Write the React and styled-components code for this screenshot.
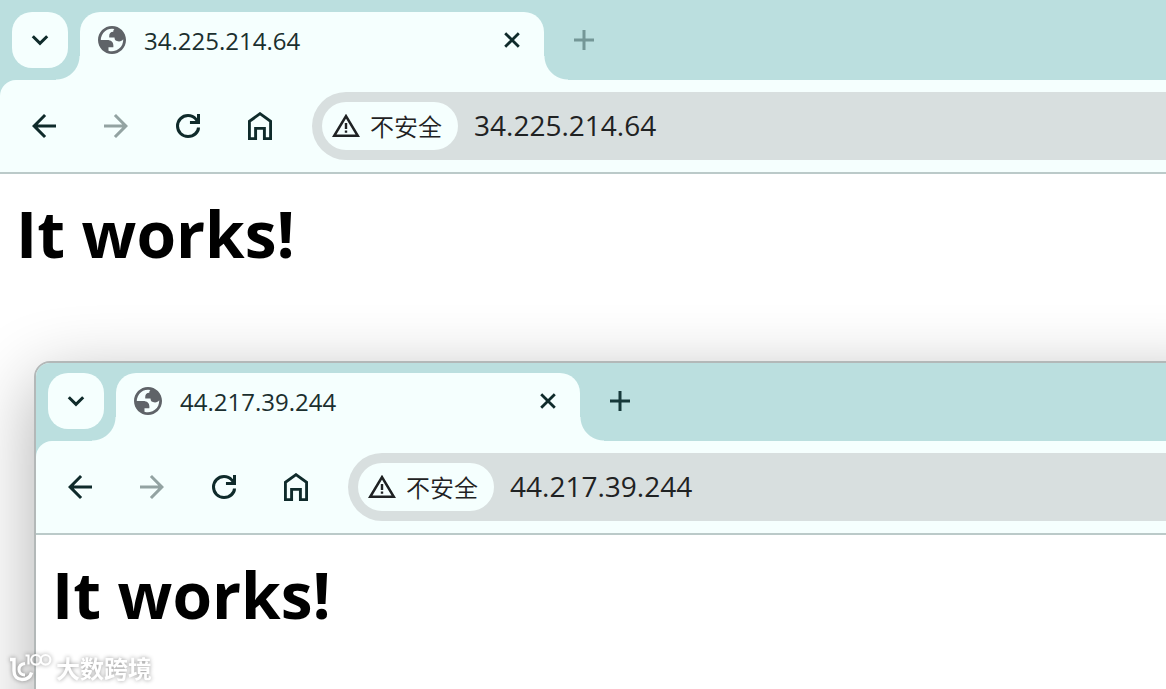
import React from "react";
import styled, { createGlobalStyle } from "styled-components";

const BackIcon = () => (
  <svg width="36" height="36" viewBox="0 0 24 24" aria-hidden="true">
    <path
      fill="currentColor"
      d="m7.825 13 5.6 5.6L12 20l-8-8 8-8 1.425 1.4-5.6 5.6H20v2Z"
    />
  </svg>
);

const ForwardIcon = () => (
  <svg width="36" height="36" viewBox="0 0 24 24" aria-hidden="true">
    <path
      fill="currentColor"
      d="m16.175 13-5.6 5.6L12 20l8-8-8-8-1.425 1.4 5.6 5.6H4v2Z"
    />
  </svg>
);

const ReloadIcon = () => (
  <svg width="36" height="36" viewBox="0 0 24 24" aria-hidden="true">
    <path
      fill="currentColor"
      d="M12 20q-3.35 0-5.675-2.325Q4 15.35 4 12t2.325-5.675Q8.65 4 12 4q1.725 0 3.3.713 1.575.712 2.7 2.037V4h2v6.7h-6.7V8.700h3.700q-.8-1.500-2.187-2.100Q13.625 6 12 6 9.5 6 7.75 7.75T6 12t1.75 4.25T12 18q2.500 0 4.250-1.750T18 13h2q0 2.900-2.325 5Q15.350 20 12 20Z"
    />
  </svg>
);

const HomeIcon = () => (
  <svg width="24" height="28" viewBox="0 0 24 28" aria-hidden="true">
    <path
      fill="none"
      stroke="currentColor"
      strokeWidth="2.9"
      d="M1.4 26.6V9.4L12 1.7l10.6 7.7v17.2h-6.2V16.4H7.6v10.2Z"
    />
  </svg>
);

const GlobeIcon = () => (
  <svg width="28" height="28" viewBox="2 2 20 20" aria-hidden="true">
    <path
      fill="#5f6368"
      fillRule="evenodd"
      d="M12 2C6.48 2 2 6.48 2 12s4.48 10 10 10 10-4.48 10-10S17.52 2 12 2zM4 12h4.4c3.407.022 4.922 1.73 4.543 5.127H9.488v2.47a8.004 8.004 0 0 0 10.498-8.083C19.327 12.504 18.332 13 17 13c-2.137 0-3.206-.916-3.206-2.75h-3.748c-.274-2.728.683-4.092 2.87-4.092 0-.975.327-1.597.811-1.97A8.004 8.004 0 0 0 4 12z"
    />
  </svg>
);

const WarningIcon = () => (
  <svg width="28" height="24" viewBox="0 0 28 24" aria-hidden="true">
    <path
      fill="none"
      stroke="currentColor"
      strokeWidth="2.6"
      d="M2.3 21.7 14 2.2l11.7 19.5Z"
    />
    <path fill="currentColor" d="M12.8 9h2.4v6h-2.4zM12.8 16.4h2.4v2.4h-2.4z" />
  </svg>
);

const ChevronIcon = () => (
  <svg width="20" height="20" viewBox="0 0 20 20" aria-hidden="true">
    <path
      fill="none"
      stroke="currentColor"
      strokeWidth="3"
      d="m2.8 6.2 7.2 7.2 7.2-7.2"
    />
  </svg>
);

const CloseIcon = () => (
  <svg width="16" height="16" viewBox="0 0 16 16" aria-hidden="true">
    <path
      fill="none"
      stroke="currentColor"
      strokeWidth="2.8"
      d="m1.2 1.2 13.6 13.6M14.8 1.2 1.2 14.8"
    />
  </svg>
);

const PlusIcon = () => (
  <svg width="20" height="20" viewBox="0 0 20 20" aria-hidden="true">
    <path fill="currentColor" d="M8.5 0h3v8.5H20v3h-8.5V20h-3v-8.5H0v-3h8.5z" />
  </svg>
);

const WatermarkLogo = () => (
  <svg width="44" height="34" viewBox="0 0 44 34" aria-hidden="true">
    <g fill="none" stroke="#fff">
      <path
        strokeWidth="3.4"
        d="M2 8.500h4v11.500c0 5 3.200 8.500 8 8.500 4.600 0 8.400-2.600 9.600-7"
      />
      <path strokeWidth="3" d="M17 12.500c-4 .5-6 3-6 6 0 3.200 2.400 5.500 6 5.500" />
      <path strokeWidth="2.2" d="M17.500 4.500h3v9" />
      <circle strokeWidth="2.2" cx="28" cy="8.800" r="4.800" />
      <circle strokeWidth="2.2" cx="37.600" cy="8.800" r="4.800" />
    </g>
  </svg>
);

const BrowserWindow = ({ address, floating, active }) => {
  return (
    <Window $floating={floating}>
      <TabStrip $floating={floating}>
        <TabSearch type="button" aria-label="搜索标签页">
          <ChevronIcon />
        </TabSearch>
        <Tab>
          <GlobeIcon />
          <TabTitle>{address}</TabTitle>
          <CloseButton type="button" aria-label="关闭">
            <CloseIcon />
          </CloseButton>
        </Tab>
        <NewTab type="button" aria-label="打开新的标签页" $active={active}>
          <PlusIcon />
        </NewTab>
      </TabStrip>
      <ToolbarBack>
        <Toolbar>
          <NavButton type="button" aria-label="后退">
            <BackIcon />
          </NavButton>
          <NavButton type="button" aria-label="前进" disabled>
            <ForwardIcon />
          </NavButton>
          <NavButton type="button" aria-label="重新加载">
            <ReloadIcon />
          </NavButton>
          <NavButton type="button" aria-label="主页">
            <HomeIcon />
          </NavButton>
          <Omnibox>
            <SecurityChip type="button">
              <WarningIcon />
              不安全
            </SecurityChip>
            <AddressInput
              type="text"
              aria-label="地址"
              defaultValue={address}
              spellCheck={false}
            />
          </Omnibox>
        </Toolbar>
      </ToolbarBack>
      <Content>
        <h1>It works!</h1>
      </Content>
    </Window>
  );
};

const App = () => {
  return (
    <Desktop>
      <GlobalStyle />
      <BrowserWindow address="34.225.214.64" />
      <BrowserWindow address="44.217.39.244" floating active />
      <Watermark>
        <WatermarkLogo />
        <span>大数跨境</span>
      </Watermark>
    </Desktop>
  );
};

const GlobalStyle = createGlobalStyle`
  * {
    box-sizing: border-box;
  }
  body {
    margin: 0;
    font-family: "Open Sans", "Noto Sans CJK SC", sans-serif;
    color: #1b2f2f;
  }
  button,
  input {
    margin: 0;
    padding: 0;
    border: none;
    background: none;
    font: inherit;
    color: inherit;
  }
  svg {
    display: block;
    flex-shrink: 0;
  }
`;

const Desktop = styled.div`
  position: relative;
  min-height: 100vh;
  overflow: hidden;
  background: #ffffff;
`;

const Window = styled.section`
  background: #ffffff;
  ${({ $floating }) =>
    $floating &&
    `
    position: absolute;
    top: 361px;
    left: 34px;
    right: -80px;
    bottom: -80px;
    overflow: hidden;
    border: 2px solid #b3b8b8;
    border-radius: 16px;
    box-shadow: 0 20px 72px rgba(0, 0, 0, 0.32);
  `}
`;

const TabStrip = styled.div`
  display: flex;
  gap: 12px;
  padding: ${({ $floating }) => ($floating ? "10px" : "12px")} 12px 0;
  background: #bbdfdf;
`;

const TabSearch = styled.button`
  display: grid;
  place-items: center;
  width: 56px;
  height: 56px;
  border-radius: 20px;
  background: #f5fffe;
  color: #0f2b2b;
`;

const Tab = styled.div`
  position: relative;
  display: flex;
  align-items: center;
  gap: 18px;
  width: 464px;
  height: 68px;
  padding: 0 20px 12px 18px;
  border-radius: 20px 20px 0 0;
  background: #f5fffe;

  /* flared feet of the tab */
  &::before,
  &::after {
    content: "";
    position: absolute;
    bottom: 0;
    width: 24px;
    height: 24px;
  }
  &::before {
    right: 100%;
    background: radial-gradient(circle at 0 0, transparent 23px, #f5fffe 24px);
  }
  &::after {
    left: 100%;
    background: radial-gradient(
      circle at 100% 0,
      transparent 23px,
      #f5fffe 24px
    );
  }
`;

const TabTitle = styled.span`
  flex: 1;
  padding-top: 2px;
  font-size: 24px;
  line-height: 32px;
`;

const CloseButton = styled.button`
  display: grid;
  place-items: center;
  width: 24px;
  height: 24px;
  color: #0f2b2b;
`;

const NewTab = styled.button`
  display: grid;
  place-items: center;
  width: 56px;
  height: 56px;
  color: ${({ $active }) => ($active ? "#17393a" : "#749797")};
`;

const ToolbarBack = styled.div`
  background: #bbdfdf;
`;

const Toolbar = styled.div`
  display: flex;
  align-items: center;
  padding: 12px 0 12px 8px;
  border-bottom: 2px solid #bbcac9;
  border-radius: 16px 0 0 0;
  background: #f5fffe;
`;

const NavButton = styled.button`
  display: grid;
  place-items: center;
  width: 72px;
  height: 68px;
  color: #0f2b2b;

  &:disabled {
    color: #93a3a2;
  }
`;

const Omnibox = styled.div`
  display: flex;
  flex: 1;
  align-items: center;
  gap: 16px;
  height: 68px;
  margin-left: 16px;
  padding: 0 10px;
  border-radius: 34px 0 0 34px;
  background: #d8dfdf;
  color: #1f2223;
`;

const SecurityChip = styled.button`
  display: flex;
  align-items: center;
  gap: 10px;
  height: 48px;
  padding: 0 16px 0 10px;
  border-radius: 24px;
  background: #f5fffe;
  font-family: "Noto Sans CJK SC", sans-serif;
  font-size: 24px;
  font-weight: 350;
  line-height: 32px;
  white-space: nowrap;
`;

const AddressInput = styled.input`
  flex: 1;
  min-width: 0;
  height: 40px;
  padding-bottom: 2px;
  font-size: 28px;
  outline: none;
`;

const Content = styled.main`
  padding: 16px;

  h1 {
    margin: 0;
    font-size: 64px;
    font-weight: 700;
    line-height: 88px;
    color: #000000;
  }
`;

const Watermark = styled.div`
  position: absolute;
  left: 8px;
  bottom: 4px;
  display: flex;
  align-items: center;
  gap: 4px;
  color: #ffffff;
  font-family: "Noto Sans CJK SC", sans-serif;
  font-size: 24px;
  font-weight: 700;
  line-height: 34px;
  filter: drop-shadow(0 0 2px rgba(0, 0, 0, 0.4));
`;

export default App;
